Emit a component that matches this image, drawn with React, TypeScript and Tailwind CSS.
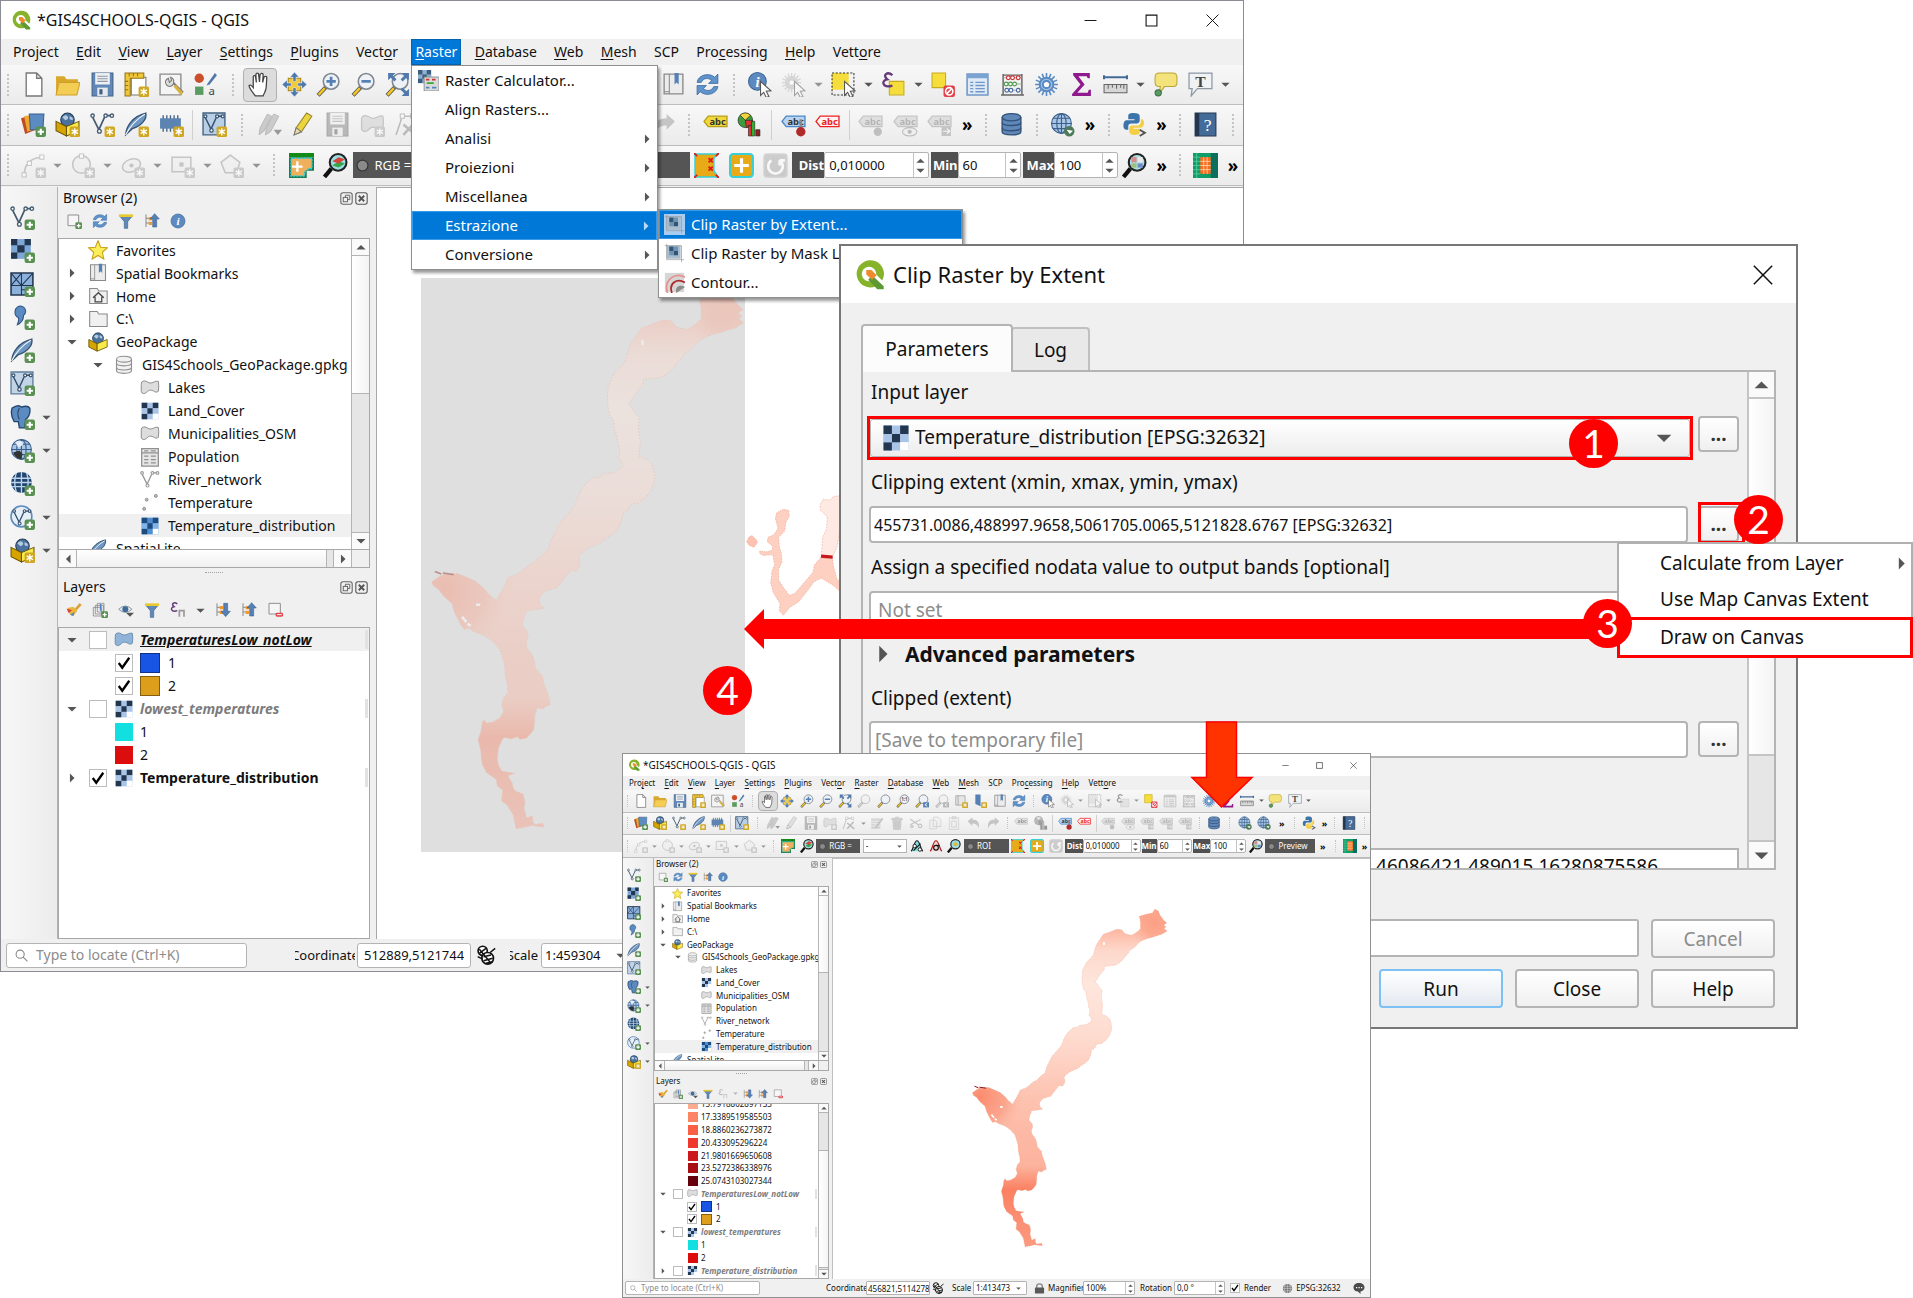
import React from "react";

type Size = "lg" | "sm";

const UI = "font-['Noto_Sans','Open_Sans',sans-serif]";

/* ---------- icon artwork, all on a 24 × 24 grid ---------- */

const plus = (
  <g>
    <rect x="14" y="14" width="10" height="10" rx="2" fill="#5b9053" />
    <path d="M19 16v6M16 19h6" stroke="#fff" strokeWidth="2" />
  </g>
);
const star = (
  <g>
    <rect x="14" y="14" width="10" height="10" rx="1.5" fill="#d0a722" />
    <path d="M19 15.5v7M16 17.2l6 3.6M22 17.2l-6 3.6" stroke="#fff" strokeWidth="1.3" />
  </g>
);
const lens = (
  <g>
    <path d="M9.500 14.500L2 22.500" stroke="#555" strokeWidth="4" />
    <path d="M8.500 15.500L2.500 22" stroke="#f3c722" strokeWidth="2.400" />
    <circle cx="14.500" cy="9" r="7.500" fill="#eef2f6" stroke="#7d8790" strokeWidth="1.500" />
  </g>
);
const darkLens = (fill: string) => (
  <g>
    <path d="M8 15L1.500 23" stroke="#111" strokeWidth="4" />
    <circle cx="14.500" cy="9" r="8" fill={fill} stroke="#222" strokeWidth="2" />
  </g>
);
const vee = (c: string) => (
  <g fill="#fff" stroke={c} strokeWidth="1.300">
    <path d="M2.500 5l6 12 5.500-12M16 3.500h4" fill="none" strokeWidth="1.600" />
    <circle cx="2.500" cy="3.500" r="1.600" />
    <circle cx="9" cy="18.500" r="1.800" />
    <circle cx="15" cy="3.500" r="1.600" />
    <circle cx="21" cy="3.500" r="1.600" />
  </g>
);
const feather = (
  <g>
    <path d="M1.500 22C2 14 8 4 21 1c1 5-3 12-13 15z" fill="#6f97c4" stroke="#35506e" strokeWidth="1.200" />
    <path d="M1.500 22C6 13 12 7 20 2" stroke="#fff" fill="none" />
  </g>
);
const box = (
  <g>
    <circle cx="12" cy="7.500" r="6.500" fill="#4a729d" stroke="#223b55" />
    <path d="M7 5q3-3 5-1t-2 4zM14 4q4 1 3 4l-3-1z" fill="#b6cbe0" />
    <path d="M1 9l10 5v9L1 18z" fill="#d6a400" stroke="#6b5300" />
    <path d="M23 9l-12 5v9l12-5z" fill="#f8ea4d" stroke="#6b5300" />
  </g>
);
const globe = (
  <g fill="none" stroke="#3a5f8a" strokeWidth="1.100">
    <circle cx="11" cy="11" r="9.500" fill="#a9c6e6" />
    <ellipse cx="11" cy="11" rx="4.500" ry="9.500" />
    <path d="M1.500 11h19M3 6h16M3 16h16M11 1.500v19" />
  </g>
);
const blob = (fill: string, c: string) => (
  <path d="M1.500 8q-.500-4 3-4.500c4-.500 5 3 8.500 2.500 4-.500 5-3 9-2q1 5 0 12c-2 1.500-4 1-6-.500-4-2-6-.500-8.500 2-2.500 2-5 1.500-6-1z" fill={fill} stroke={c} strokeWidth="1.200" />
);
const checker = (dark: string, mid: string, light: string) => (
  <g>
    <rect x="2" y="2" width="20" height="20" fill={light} />
    <path d="M2 2h6.700v6.700H2zM15.300 2H22v6.700h-6.700zM8.700 8.700h6.600v6.600H8.700zM2 15.300h6.700V22H2z" fill={dark} />
    <path d="M2 8.700h6.700v6.600H2zM15.300 8.700H22v6.600h-6.700z" fill={mid} />
    <rect x="15.300" y="15.300" width="6.700" height="6.700" fill="#fff" />
  </g>
);
const tag = (fill: string, line: string, ink: string) => (
  <g>
    <path d="M1 9l4-5h18v10H5z" fill={fill} stroke={line} strokeWidth="1.300" />
    <text x="14" y="12" textAnchor="middle" fontSize="9" fontWeight="700" fontFamily="Noto Sans" fill={ink}>
      abc
    </text>
  </g>
);
const funnel = (
  <g>
    <path d="M2 4h20l-7.500 9v10h-5V13z" fill="#6089b8" stroke="#3e6490" />
    <path d="M1.500 2h21v4h-21z" fill="#e8c930" />
  </g>
);
const gear = (fill: string) => (
  <g>
    <path
      d="M12 1v22M1 12h22M4.200 4.200l15.600 15.600M19.800 4.200L4.200 19.800M7.800 1.800l8.400 20.400M16.200 1.800L7.800 22.200M1.800 7.800l20.400 8.400M1.800 16.200l20.400-8.400"
      stroke={fill}
      strokeWidth="1.500"
    />
    <circle cx="12" cy="12" r="7.500" fill={fill} />
    <circle cx="12" cy="12" r="5" fill="none" stroke="#a9c4e2" />
    <circle cx="12" cy="12" r="2.500" fill="#fff" />
  </g>
);
const pointer = <path d="M13 9l10 9-4.500.500 2.500 5-2.500 1-2.500-5-3 3z" fill="#fff" stroke="#555" />;
const treeArrow = (up: boolean) => (
  <g>
    <path d="M3 2v19M3 8h6M3 15h6" stroke="#888" strokeWidth="1.500" fill="none" />
    <path d="M7 6h5v5H7zM7 13h5v5H7z" fill="#f39a2a" />
    <path d={up ? "M16 1l7 8h-4v12h-6V9H9z" : "M16 22l7-8h-4V2h-6v12H9z"} fill="#5580b5" stroke="#365a86" strokeWidth=".8" />
  </g>
);
const refresh = (
  <g fill="#5f93cc" stroke="#33639a" strokeWidth=".7">
    <path d="M2 10C3 3 13 0 19 5l3-3v9h-9l3-3C12 5 8 6 6 10z" />
    <path d="M22 14c-1 7-11 10-17 5l-3 3v-9h9l-3 3c4 3 8 2 10-2z" />
  </g>
);
const calc = (
  <g>
    <path d="M3 2v20M21 2v20M1 22h22M3 3h18" stroke="#666" strokeWidth="1.400" fill="none" />
    <path d="M3 5.500h18M3 11.500h18M3 17.500h18" stroke="#999" strokeWidth=".8" />
    <g fill="#fff" strokeWidth="1.100">
      <g stroke="#c33">
        <circle cx="8" cy="5.500" r="1.800" />
        <circle cx="12" cy="5.500" r="1.800" />
        <circle cx="17.500" cy="5.500" r="1.800" />
      </g>
      <g stroke="#4a9a4a">
        <circle cx="6" cy="11.500" r="1.800" />
        <circle cx="10" cy="11.500" r="1.800" />
        <circle cx="14" cy="11.500" r="1.800" />
      </g>
      <g stroke="#4668a0">
        <circle cx="6.500" cy="17.500" r="1.800" />
        <circle cx="10.500" cy="17.500" r="1.800" />
        <circle cx="17.500" cy="17.500" r="1.800" />
      </g>
    </g>
  </g>
);
const book = (
  <g>
    <path d="M3 2h18v19H3z" fill="#ececec" stroke="#8a8a8a" strokeWidth="1.300" />
    <path d="M8 2v19M3 19h5" stroke="#8a8a8a" />
    <path d="M13 1h4v11l-2-2-2 2z" fill="#5580b5" />
  </g>
);
const db = (a: string, b: string) => (
  <g fill={a} stroke={b} strokeWidth="1.300">
    <path d="M3 5v14c0 4 18 4 18 0V5" />
    <ellipse cx="12" cy="5" rx="9" ry="3.500" />
    <path d="M3 10c0 4 18 4 18 0M3 15c0 4 18 4 18 0" fill="none" />
  </g>
);

const ART: Record<string, React.ReactNode> = {
  logo: (
    <g>
      <path
        fillRule="evenodd"
        d="M12 1a10.500 10.500 0 1 0 5 20l-4-4a5.600 5.600 0 1 1 4.200-5l4.600 4.600A10.500 10.500 0 0 0 12 1z"
        fill="#86b329"
      />
      <path d="M14 12.500l9 8.500v2.500h-5l-7-7.500z" fill="#5e9a34" />
      <path d="M9.500 8.500h4l4 4-3.500 3.500-4.500-4z" fill="#ef8b2c" />
    </g>
  ),
  doc: <path d="M5 1h10l5 5v17H5zM15 1v5h5" fill="#fff" stroke="#777" strokeWidth="1.300" />,
  folder: (
    <g>
      <path d="M1 4h8l2 3h11v4H3v11H1z" fill="#d9a72a" />
      <path d="M4 10h20l-3 12H1z" fill="#f4cd55" stroke="#cf9f2a" />
    </g>
  ),
  save: (
    <g>
      <path d="M2 1h20v22H2z" fill="#5f87b8" stroke="#3f5f87" />
      <path d="M5 1h14v11H5z" fill="#eef0f2" />
      <path d="M7 4h10M7 6.500h10M7 9h10" stroke="#8a96a4" />
      <path d="M7 15h10v8H7z" fill="#e8ebee" />
      <path d="M9 16.500h3v5H9z" fill="#3f5f87" />
    </g>
  ),
  layout: (
    <g>
      <path d="M7 5h14v17H7z" fill="#fff" stroke="#777" />
      <path d="M1 1h18v5H6v17H1z" fill="#f0c63a" stroke="#93731a" />
      <path d="M5 1v3M9 1v3M13 1v3M1 9h3M1 13h3M1 17h3" stroke="#93731a" />
      {star}
    </g>
  ),
  wrench: (
    <g>
      <path d="M1 2h20v20H1z" fill="#f4f4f4" stroke="#8c8c8c" strokeWidth="1.300" />
      <path d="M9 6a4 4 0 1 0 5 5l7 10 2-2-9-9a4 4 0 0 0-3-5l1 3-2 2z" fill="#ddd" stroke="#777" />
      <path d="M15 13l7 8" stroke="#d9b23c" strokeWidth="3" />
    </g>
  ),
  style: (
    <g>
      <circle cx="6" cy="6" r="4.500" fill="#cc4f2c" />
      <path d="M2 14h8v8H2z" fill="#5a9a63" />
      <path d="M14 11L21 1l2 2-7 9-3 1z" fill="#4f79ac" />
      <text x="18" y="22" textAnchor="middle" fontSize="11" fontFamily="Noto Sans" fill="#444">
        a
      </text>
    </g>
  ),
  hand: (
    <path
      d="M8 23c-2-3-6-7-6-10q1.500-1.500 4 2V5q0-2 2-1.500L9 10 8.500 2.500Q9 .500 11 1.500l1 8 .500-7Q14 .500 15.500 2l-.500 8 1.500-5.500q2-1 2.500.500l-.500 9c0 4-2 6-3 9z"
      fill="#fff"
      stroke="#444"
      strokeWidth="1.200"
    />
  ),
  pan: (
    <g>
      <path d="M6 6h12v12H6z" fill="#f1c93a" stroke="#a98513" />
      <path
        d="M12 0l4.500 5h-3v4h-3V5h-3zM12 24l4.500-5h-3v-4h-3v4h-3zM0 12l5-4.500v3h4v3H5v3zM24 12l-5-4.500v3h-4v3h4v3z"
        fill="#4f79ac"
        stroke="#fff"
        strokeWidth=".5"
      />
    </g>
  ),
  zin: <g>{lens}<path d="M14.500 4.500v9M10 9h9" stroke="#5580b5" strokeWidth="2.600" /></g>,
  zout: <g>{lens}<path d="M10 9h9" stroke="#5580b5" strokeWidth="2.600" /></g>,
  zfull: (
    <g>
      {lens}
      <path d="M3 1h7L7.500 3.500 11 7 9 9 5.500 5.500 3 8zM23 1v7l-2.500-2.500L17 9l-2-2 3.500-3.500L16 1zM23 23h-7l2.500-2.500L15 17l2-2 3.500 3.500L23 16z" fill="#4f79ac" />
    </g>
  ),
  zsel: lens,
  zlayer: lens,
  znative: (
    <g>
      {lens}
      <text x="14.500" y="12" textAnchor="middle" fontSize="8" fontWeight="700" fontFamily="Noto Sans" fill="#555">
        1:1
      </text>
    </g>
  ),
  zlast: <g>{lens}<path d="M14 14h10v9H14z" fill="#5580b5" /><path d="M21 16l-4 2.500 4 2.500" stroke="#fff" fill="none" strokeWidth="1.500" /></g>,
  newmap: <g><path d="M3 3h16v16H3z" fill="#e6e6e6" stroke="#888" /><path d="M7 3v16" stroke="#888" />{star}</g>,
  bookmarkadd: <g><path d="M4 1h9v20l-9-4z" fill="#5580b5" />{star}</g>,
  book,
  refresh,
  identify: (
    <g>
      <circle cx="10" cy="9" r="8.500" fill="#5c8ac0" stroke="#3c6595" />
      <text x="10" y="14" textAnchor="middle" fontSize="14" fontStyle="italic" fontWeight="700" fontFamily="Liberation Serif" fill="#fff">
        i
      </text>
      {pointer}
    </g>
  ),
  info: (
    <g>
      <circle cx="12" cy="12" r="10.500" fill="#5c8ac0" stroke="#3c6595" />
      <text x="12" y="18" textAnchor="middle" fontSize="17" fontStyle="italic" fontWeight="700" fontFamily="Liberation Serif" fill="#fff">
        i
      </text>
    </g>
  ),
  action: <g><g transform="scale(.85)">{gear("#b9b9b9")}</g>{pointer}</g>,
  select: <g><path d="M1 1h16v16H1z" fill="#f5dd3c" /><path d="M1 1h21v21H1z" fill="none" stroke="#333" strokeDasharray="2 1.500" />{pointer}</g>,
  selexp: (
    <g>
      <path d="M8 9h14v13H8z" fill="#f5dd3c" stroke="#c7ab1c" />
      <path d="M11 3C6-1 1 3 6 7c-6 1-5 9 5 6" stroke="#653a78" strokeWidth="2.200" fill="none" />
    </g>
  ),
  desel: (
    <g>
      <path d="M1 1h13v14H1z" fill="#f5dd3c" stroke="#c7ab1c" />
      <rect x="12" y="13" width="11" height="11" rx="2" fill="#e2434b" />
      <circle cx="17.500" cy="18.500" r="3.500" fill="none" stroke="#fff" strokeWidth="1.500" />
      <path d="M15 21l5-5" stroke="#fff" strokeWidth="1.500" />
    </g>
  ),
  table: (
    <g>
      <path d="M2 2h20v20H2z" fill="#dfeaf6" stroke="#6f98c8" strokeWidth="1.500" />
      <path d="M2 2h20v4H2z" fill="#7aa3d2" />
      <path d="M5 10h3M10 10h9M5 13h3M10 13h9M5 16h3M10 16h9M5 19h3M10 19h9" stroke="#6f98c8" strokeWidth="1.300" />
    </g>
  ),
  calc,
  gear: gear("#5a8bc4"),
  sigma: <path d="M4 1h16v5h-2l-1-2H9l6 8-7 8h10l1-3h2v6H3v-2l8-9-7-9z" fill="#8e1a8e" />,
  ruler: (
    <g>
      <path d="M1 5h22M1 3v4M23 3v4" stroke="#466a96" strokeWidth="2" />
      <path d="M1 12h22v8H1z" fill="#d7d7d7" stroke="#666" />
      <path d="M5 12v4M9 12v3M13 12v4M17 12v3M20 12v4" stroke="#666" />
    </g>
  ),
  tip: (
    <g>
      <path d="M6 1h13q4 0 4 4v5q0 4-4 4h-8l-5 7 1-7q-5 0-5-4V5q0-4 4-4z" fill="#f3e37a" stroke="#b9a53a" />
      <circle cx="5" cy="20" r="3" fill="#5a9a63" stroke="#386b40" />
    </g>
  ),
  note: (
    <g>
      <path d="M1 1h22v15H9l-6 7 1-7H1z" fill="#f0f2f4" stroke="#8c98a4" strokeWidth="1.200" />
      <text x="12" y="14" textAnchor="middle" fontSize="15" fontWeight="700" fontFamily="Liberation Serif" fill="#444">
        T
      </text>
    </g>
  ),
  layers: (
    <g>
      <path d="M0 6l10-3 4 14-10 4z" fill="#bf4a25" />
      <path d="M3 4l11-2 3 13-11 4z" fill="#eba92f" />
      <path d="M8 2h14l-1 15H9z" fill="#5b8bc0" stroke="#3a618f" />
      {plus}
    </g>
  ),
  boxstar: <g>{box}{star}</g>,
  box,
  veestar: <g>{vee("#435a70")}{star}</g>,
  veeplus: <g>{vee("#435a70")}{plus}</g>,
  vee: vee("#999"),
  featherstar: <g>{feather}{star}</g>,
  featherplus: <g>{feather}{plus}</g>,
  feather,
  chip: (
    <g>
      <path d="M4 3v16M7.500 3v16M11 3v16M14.500 3v16M18 3v16" stroke="#44617f" strokeWidth="1.300" />
      <path d="M1 6h20v10H1z" fill="#5b84b3" />
      {star}
    </g>
  ),
  virt: <g><path d="M1 1h21v21H1z" fill="#b9cfe6" stroke="#44617f" strokeWidth="1.300" /><g transform="translate(1 1) scale(.9)">{vee("#35506e")}</g>{star}</g>,
  virtplus: <g><path d="M1 1h21v21H1z" fill="#c3d4e6" stroke="#5f7d9c" strokeWidth="1.300" /><g transform="translate(1 1) scale(.9)">{vee("#35506e")}</g>{plus}</g>,
  pencils: (
    <g>
      <path d="M2 22l1-7L10 2l4 2-7 14zM8 22l1-7L16 2l5 2-8 15z" fill="#a5a5a5" stroke="#777" strokeWidth=".8" />
      <path d="M16 17h8l-4 5z" fill="#444" />
    </g>
  ),
  pencil: (
    <g>
      <path d="M3 22l2-7L15 1l5 3-10 15z" fill="#ecd53c" stroke="#92812a" />
      <path d="M3 22l2-7 5 4z" fill="#e9d9b5" stroke="#777" />
    </g>
  ),
  shape: <g>{blob("#ccc", "#999")}{star}</g>,
  node: <g><path d="M2 22L8 4h10M8 4h3" stroke="#888" fill="none" strokeWidth="1.500" /><path d="M6 2h4v4H6zM16 2h4v4h-4z" fill="#fff" stroke="#888" /><path d="M9 12l12 10M20 10L9 22" stroke="#888" strokeWidth="2.500" /></g>,
  multi: <g><path d="M2 4h16v18H2z" fill="#bbb" /><path d="M2 9h16M2 13h16M2 17h16" stroke="#fff" /><path d="M8 20L20 3l3 2-12 16z" fill="#999" /></g>,
  trash: <path d="M3 4h6V2h6v2h6v3H3zM5 8h14l-1 15H6zM9 10v10M12 10v10M15 10v10" fill="#c9a9a4" stroke="#b08a86" />,
  cut: <g fill="none" stroke="#999" strokeWidth="2"><path d="M2 5l14 10M2 15L20 6" /><circle cx="19" cy="17" r="3" /><circle cx="5" cy="18" r="2" /></g>,
  copy: <path d="M9 2h9l4 4v12H9zM3 7h9l3 3v12H3z" fill="#eee" stroke="#999" />,
  paste: <path d="M4 3h16v20H4zM9 1h6v4H9zM8 9h8v10H8z" fill="#eee" stroke="#999" />,
  undo: <path d="M1 9l8-7v4c9 0 13 5 11 15-2-6-5-8-11-8v4z" fill="#999" />,
  redo: <path d="M23 9l-8-7v4C6 6 2 11 4 21c2-6 5-8 11-8v4z" fill="#999" />,
  tagy: tag("#f0d83c", "#b99f16", "#333"),
  tagb: <g>{tag("#b8d4f3", "#4b86c8", "#333")}<path d="M19 7v8" stroke="#888" strokeWidth="2.500" /><circle cx="19" cy="19" r="4.500" fill="#b02a2a" /></g>,
  tagr: tag("#fff3f3", "#ee2222", "#ee2222"),
  tagpin: <g>{tag("#ccc", "#999", "#777")}<circle cx="19" cy="19" r="4" fill="#a88" /></g>,
  tageye: <g>{tag("#ccc", "#999", "#777")}<ellipse cx="16" cy="19" rx="7" ry="4" fill="#eee" stroke="#888" /><circle cx="16" cy="19" r="2" fill="#888" /></g>,
  tagmove: <g>{tag("#ccc", "#999", "#777")}<path d="M14 14h9v9h-9z" fill="#999" /><path d="M15.500 18.500h6M19 16l3 2.500-3 2.500" stroke="#fff" fill="none" /></g>,
  chart: (
    <g stroke="#222" strokeWidth=".6">
      <circle cx="8" cy="8" r="7" fill="#3c9c3c" />
      <path d="M8 8L3 3a7 7 0 0 1 10 0z" fill="#f2d33c" />
      <path d="M8 8l7 0a7 7 0 0 1-6 7z" fill="#d33" />
      <path d="M11 13h3v10h-3z" fill="#d33" />
      <path d="M14 9h3v14h-3z" fill="#2cb82c" />
      <path d="M18 17h4v6h-4z" fill="#8b2020" />
    </g>
  ),
  db: db("#5f87b8", "#33527a"),
  dbg: db("#f1f1f1", "#8f8f8f"),
  globe: <g>{globe}<circle cx="18.500" cy="18.500" r="5" fill="#4d7a58" /><path d="M16 17l3 4 3-3z" fill="#fff" /></g>,
  python: (
    <g>
      <path d="M11 1c-4 0-5 1-5 3v3h6v1H4c-3 0-4 9 0 9h2v-3c0-2 1-3 3-3h5c2 0 3-1 3-3V4c0-2-2-3-6-3z" fill="#3a74a8" />
      <path d="M12 22c4 0 5-1 5-3v-3h-6v-1h7c4 0 4-8 1-8h-1v3c0 2-2 3-3 3h-5c-2 0-3 1-3 3v3c0 2 2 3 5 3z" fill="#f4cf43" />
      <path d="M17 17l5 3-5 3" stroke="#555" fill="none" strokeWidth="1.800" />
    </g>
  ),
  help: (
    <g>
      <path d="M2 1h20v22H2z" fill="#456b98" stroke="#22364f" />
      <path d="M2 1h4v22H2z" fill="#22364f" />
      <text x="14" y="18" textAnchor="middle" fontSize="17" fontFamily="Liberation Serif" fill="#fff">
        ?
      </text>
    </g>
  ),
  arc: <g><path d="M3 22Q3 5 20 4" fill="none" stroke="#999" strokeWidth="1.500" /><path d="M1 19h4v4H1zM18 2h4v4h-4zM6 8h4v4H6z" fill="#fff" stroke="#999" />{star}</g>,
  circ: <g><circle cx="11" cy="11" r="8.500" fill="#eee" stroke="#999" strokeWidth="1.500" /><path d="M9 1h4v4H9z" fill="#fff" stroke="#999" />{star}</g>,
  elli: <g><ellipse cx="11" cy="12" rx="9" ry="6" transform="rotate(-20 11 12)" fill="#eee" stroke="#999" strokeWidth="1.500" /><circle cx="11" cy="12" r="2" fill="#999" />{star}</g>,
  rect: <g><path d="M2 4h18v14H2z" fill="#eee" stroke="#999" strokeWidth="1.500" /><path d="M9 9h4v4H9z" fill="#999" />{star}</g>,
  poly: <g><path d="M11 2l9 7-3 10H6L2 9z" fill="#eee" stroke="#999" strokeWidth="1.500" />{star}</g>,
  scpmap: (
    <g>
      <path d="M0 0h24v4H0z" fill="#138a13" />
      <path d="M0 4h24v13h-7v7H0z" fill="#1c7a4c" />
      <path d="M2 5h20v10h-3l-4 3v4H2z" fill="#eeb05c" stroke="#35d0d8" strokeWidth="1.500" strokeDasharray="2 1" />
      <path d="M8 8v10M3 13h10" stroke="#fff" strokeWidth="2.200" />
    </g>
  ),
  scplens: <g>{darkLens("#9adfe3")}<path d="M9 12l6-4 6 2-6 4z" fill="#3aa24a" /><path d="M9 8l6-4 6 2-6 4z" fill="#d8433a" /></g>,
  nb: <g><path d="M2 21C6 18 7 3 12 3s6 15 10 18" fill="#7fe0e4" stroke="#111" strokeWidth="1.800" /><path d="M6 20L18 8" stroke="#111" strokeWidth="2" /><circle cx="8" cy="12" r="3" fill="#fff" stroke="#111" strokeWidth="1.500" /><circle cx="17" cy="18" r="3" fill="#fff" stroke="#111" strokeWidth="1.500" /></g>,
  nbr: <g><path d="M2 21C6 18 7 3 12 3s6 15 10 18" fill="#f6d7d7" stroke="#b01818" strokeWidth="2" /><circle cx="12" cy="15" r="4" fill="none" stroke="#111" strokeWidth="2" /><path d="M12 11h6" stroke="#111" strokeWidth="2" /></g>,
  goldlens: <g>{darkLens("#9adfe3")}<path d="M14.500 5v8M10.500 9h8" stroke="#eeb422" strokeWidth="3" /></g>,
  roi: (
    <g>
      <path d="M1 1h22l-4 4v12l4 6H1z" fill="#e9aa17" />
      <path d="M1 1h22l-4 4v12l4 6H1z" fill="none" stroke="#35d0d8" strokeWidth="1.500" />
      <path d="M14 5l4 4M18 5l-4 4M14 13l4 4M18 13l-4 4M0 0l3 3M24 0l-3 3M0 24l3-3M24 24l-3-3" stroke="#e01818" strokeWidth="1.800" />
    </g>
  ),
  roiplus: <g><rect x="1" y="1" width="22" height="22" rx="3" fill="#e9aa17" stroke="#35d0d8" strokeWidth="2" /><path d="M12 5v14M5 12h14" stroke="#fff" strokeWidth="3" /></g>,
  roire: <g><rect x="1" y="1" width="22" height="22" rx="3" fill="#a8a89c" stroke="#a8b8ba" strokeWidth="1.500" /><path d="M8 7a7 7 0 1 0 8 0M16 7v5M16 7h5" fill="none" stroke="#fff" strokeWidth="2.600" /></g>,
  scplens2: <g>{darkLens("#a9dfe5")}<path d="M9 4h5v5H9z" fill="#d98a8a" /><path d="M15 4h5v5h-5z" fill="#e8e8e8" /><path d="M9 10h5v4H9z" fill="#9cc27a" /><path d="M15 10h5v4h-5z" fill="#6b8cc9" /></g>,
  teal: (
    <g>
      <path d="M0 0h24v24H0z" fill="#0f9d68" />
      <path d="M17 0h7v24h-7z" fill="#0a6f5c" />
      <path d="M7 4h10v16H7z" fill="#ff6a1f" />
      <path d="M7 8h10M7 12h10M7 16h10M10.300 4v16M13.600 4v16" stroke="#ffd9a8" strokeWidth=".8" />
      <path d="M0 4h7M0 8h7M0 12h7M0 16h7M0 20h7M3.500 0v24" stroke="#6fd8ae" strokeWidth=".6" />
    </g>
  ),
  rasterplus: (
    <g>
      <path d="M1 1h19v19H1z" fill="#7fa7d6" />
      <path d="M1 1h6v6H1zM14 1h6v6h-6zM7 7h7v7H7zM1 14h6v6H1z" fill="#22364f" />
      {plus}
    </g>
  ),
  mesh: <g><path d="M1 1h21v21H1z" fill="#8bb0db" stroke="#22364f" strokeWidth="1.500" /><path d="M1 13h21M11 1v21M1 1l10 12M22 1L11 13M1 13L11 1M11 17h11" stroke="#22364f" fill="none" />{plus}</g>,
  comma: <g><path d="M5 6a5 5 0 1 1 8 4c0 4-2 7-6 9 1-3 2-5 1-7a5 5 0 0 1-3-6z" fill="#5b8bc0" stroke="#2e5280" />{plus}</g>,
  pg: <g><path d="M2 3q6-4 9-1 6-2 8 1 1 7-4 11l-1 8H9l-1-6H4Q0 9 2 3z" fill="#5b8bc0" stroke="#27466c" strokeWidth="1.300" /><path d="M9 3q-3 5 0 11" stroke="#27466c" fill="none" />{plus}</g>,
  wms: <g>{globe}<path d="M3 14l6-2 3 3-1 5q-5 1-8-6z" fill="#333" /><path d="M5 4q5-3 7 0t-4 5z" fill="#e3edf7" />{plus}</g>,
  wcs: <g><circle cx="11" cy="11" r="10" fill="#22456e" /><path d="M2 7h18M1 11h20M2 15h18M11 1v20M6 2q-3 9 0 18M16 2q3 9 0 18" stroke="#bcd4ee" strokeWidth="1.300" fill="none" />{plus}</g>,
  wfs: <g><circle cx="11" cy="11" r="10" fill="#e6eff8" stroke="#5b8bc0" strokeWidth="1.500" /><g transform="translate(2 3) scale(.8)">{vee("#35506e")}</g>{plus}</g>,
  addlay: <g><path d="M3 3h16v16H3z" fill="#f6f6f6" stroke="#8f8f8f" strokeWidth="1.500" />{plus}</g>,
  dellay: <g><path d="M3 2h17v16H3z" fill="#f6f6f6" stroke="#8f8f8f" strokeWidth="1.500" /><rect x="13" y="16" width="11" height="6" rx="2" fill="#e2434b" /><path d="M15 19h7" stroke="#fff" strokeWidth="1.500" /></g>,
  funnel,
  collapse: treeArrow(true),
  expand: treeArrow(false),
  fav: <path d="M12 1l3.200 7.600 8 .700-6 5.400 1.800 8.200-7-4.400-7 4.400 1.800-8.200-6-5.400 8-.700z" fill="#fbee5a" stroke="#c9a21a" strokeWidth="1.300" />,
  home: <g><path d="M2 3h9l2 3h10v15H2z" fill="#f0f0f0" stroke="#8a8a8a" strokeWidth="1.300" /><path d="M6 14l6.500-6 6.500 6M8.500 13v6h8v-6" fill="none" stroke="#444" strokeWidth="1.500" /></g>,
  dir: <path d="M2 3h9l2 3h10v15H2z" fill="#f0f0f0" stroke="#8a8a8a" strokeWidth="1.300" />,
  blobg: blob("#ddd", "#8f8f8f"),
  blobb: blob("#8fb4d8", "#6e90b0"),
  ras: checker("#22364f", "#a9c4e6", "#a9c4e6"),
  rasb: checker("#1d4b80", "#7fb4e4", "#4f8fd0"),
  tabg: <g><path d="M2 2h20v21H2z" fill="#e6e6e6" stroke="#8f8f8f" strokeWidth="1.500" /><path d="M2 7h20M5 11h5M13 11h6M5 15h5M13 15h6M5 19h5M13 19h6M5 4.500h5M13 4.500h6" stroke="#8f8f8f" strokeWidth="1.500" /></g>,
  pts: <g fill="#bbb" stroke="#888"><circle cx="5" cy="19" r="1.800" /><circle cx="8" cy="8" r="1.800" /><circle cx="19" cy="3.500" r="1.800" /></g>,
  brush: <g><path d="M13 13L22 3" stroke="#d9a23c" strokeWidth="4" /><path d="M2 9l9-2 6 6-6 8-5-2z" fill="#e9b53c" /><path d="M1 10l8 2-5 5z" fill="#d8433a" /><path d="M6 19l7-4-2 6z" fill="#4f86c2" /></g>,
  group: <g><path d="M2 8h12v13H2zM5 5h12v13H5zM8 2h10v13H8z" fill="#eee" stroke="#777" /><path d="M13 3v10" stroke="#4f86c2" strokeWidth="2.500" />{plus}</g>,
  eye: <g><path d="M1 11q10-10 20 0-10 9-20 0z" fill="#e9eef2" stroke="#8a97a3" strokeWidth="1.500" /><circle cx="11" cy="11" r="4.500" fill="#3f6a99" /><path d="M12 16h12l-6 6z" fill="#555" /></g>,
  eps: <g><path d="M11 3C6-1 1 3 6 7c-6 1-5 9 5 6" stroke="#653a78" strokeWidth="2.200" fill="none" /><path d="M14 22v-9h7v9M14 19v3M21 19v3" stroke="#999" strokeWidth="2.500" fill="none" /></g>,
  rcalc: <g><path d="M0 0h15v15H0z" fill="#3c5d7c" /><path d="M5 0h5v5H5zM0 5h5v5H0zM10 5h5v5h-5zM5 10h5v5H5z" fill="#8fb0cf" /><path d="M7 8h17v16H7z" fill="#d9d9d9" stroke="#888" /><path d="M9 11h4M16 11h4" stroke="#c33" strokeWidth="2" /><path d="M10 15h8" stroke="#3a3" strokeWidth="2" /><path d="M9 20h4M16 20h5" stroke="#4f86c2" strokeWidth="2" /></g>,
  clip: <g><path d="M3 3h16v15H3z" fill="#a9bdcc" /><path d="M6 4h5v5H6zM11 9h5v5h-5z" fill="#2f5677" /><path d="M11 4h5v5h-5zM6 9h5v5H6z" fill="#6f93b0" /><path d="M1 3h19v19M3 1v18h20" fill="none" stroke="#999" strokeWidth=".8" /></g>,
  contour: <g><path d="M1 1h22v22H1z" fill="#d6d6d6" /><path d="M4 24C-1 8 14 0 24 6" fill="none" stroke="#e79090" strokeWidth="2" /><path d="M9 24C5 12 15 7 24 12" fill="none" stroke="#b02a2a" strokeWidth="2" /><path d="M14 24c-2-7 4-10 10-7z" fill="#8c8c8c" /></g>,
  bug: <g><circle cx="8" cy="7" r="5.500" fill="#fff" stroke="#111" strokeWidth="2" /><circle cx="14" cy="16" r="7" fill="#fff" stroke="#111" strokeWidth="2" /><path d="M4 5l14 17M4 10L12 4M9 14l9-2M9 19l11-3M12 22l8-2M17 9l6-5M2 14l6 3" stroke="#111" strokeWidth="1.800" /></g>,
  lock: <g><path d="M6 11V7q0-5 6-5t6 5v4" fill="none" stroke="#888" strokeWidth="3" /><rect x="2" y="10" width="20" height="13" rx="1" fill="#5a5a5a" /></g>,
  crs: <g><circle cx="12" cy="12" r="10" fill="#777" /><path d="M2 12h20M4 7h16M4 17h16M12 2v20M7 3q-3 9 0 18M17 3q3 9 0 18" fill="none" stroke="#ddd" /></g>,
  msg: <g><path d="M12 2C5 2 1 6 1 11s4 8 9 8l5 5v-5c5-1 8-4 8-8 0-5-4-9-11-9z" fill="#4b4b4b" /><path d="M6 11h2.500M11 11h2.500M16 11h2.500" stroke="#fff" strokeWidth="2.500" /></g>,
  search: <g fill="none" stroke="#888" strokeWidth="2"><circle cx="9.500" cy="9.500" r="7.500" /><path d="M15 15l8 8" /></g>,
  float: <g fill="none" stroke="#666"><rect x="1.500" y="1.500" width="21" height="21" rx="4" strokeWidth="2" /><rect x="6" y="10" width="8" height="8" strokeWidth="1.800" /><path d="M10 10V6h8v8h-4" strokeWidth="1.800" /></g>,
  closex: <g fill="none" stroke="#555"><rect x="1.500" y="1.500" width="21" height="21" rx="4" strokeWidth="2" /><path d="M7 7l10 10M17 7L7 17" strokeWidth="3.500" /></g>,
  min: <path d="M1 12h22" stroke="#111" strokeWidth="1.800" />,
  max: <path d="M2 2h20v20H2z" fill="none" stroke="#111" strokeWidth="2" />,
  x: <path d="M1 1l22 22M23 1L1 23" stroke="#111" strokeWidth="1.800" />,
  down: <path d="M1 7h22L12 18z" fill="#555" />,
  up: <path d="M1 18h22L12 7z" fill="#555" />,
  right: <path d="M7 1v22l11-11z" fill="#555" />,
  rightlight: <path d="M7 1v22l11-11z" fill="#b9d8f5" />,
  left: <path d="M18 1v22L7 12z" fill="#555" />,
};

const Icon = ({ n, c }: { n: string; c: string }) => (
  <svg viewBox="0 0 24 24" className={c} aria-hidden="true">
    {ART[n]}
  </svg>
);

/* ---------- size tables for the two application windows ---------- */

const SIZES = {
  lg: {
    text: "text-[14px]",
    title: "h-[38px] pl-[10px] gap-[6px] text-[16px]",
    logo: "size-[20px]",
    winBtn: "w-[61px]",
    winIcon: "size-[13px]",
    menu: "h-[26px] pl-[8px]",
    menuList: "w-[876px]",
    menuItem: "px-1",
    bars: "h-[121px]",
    bar1: "w-[1232px]",
    icon: "size-[25px]",
    tri: "size-[9px]",
    step: "w-[15px]",
    chev: "text-[17px]",
    grip: "h-[22px] border-l-2",
    side: "w-[57px] pt-[14px]",
    sideGrid: "h-[366px] pl-[9px]",
    dock: "w-[312px] mr-[6px]",
    head: "h-[22px] pl-[5px] pr-[2px]",
    headIcon: "size-[13px]",
    tools: "h-[24px] pl-[8px] gap-[10px] mb-[5px]",
    toolIcon: "size-[16px]",
    tree: "h-[330px]",
    treeRows: "h-[321px]",
    bar: "w-[18px]",
    hbar: "h-[18px]",
    split: "h-[8px]",
    layers: "",
    cell: "w-[26px]",
    treeIcon: "size-[20px]",
    arrow: "size-[10px]",
    gap: "pl-[5px]",
    layerGap: "pl-[3px]",
    check: "size-[18px]",
    tick: "size-[14px]",
    swatch: "size-[20px]",
    status: "h-[32px] px-[5px]",
    thumb: "h-[138px]",
    ind: ["pl-0", "pl-[26px]", "pl-[52px]"],
    input: "h-[26px] text-[13px]",
    field: "px-[4px]",
    labelText: "text-[13px]",
  },
  sm: {
    text: "text-[8px]",
    title: "h-[22px] pl-[5px] gap-[3px] text-[10px]",
    logo: "size-[12px]",
    winBtn: "w-[34px]",
    winIcon: "size-[7px]",
    menu: "h-[14px] pl-[4px]",
    menuList: "w-[491px]",
    menuItem: "px-[2px]",
    bars: "h-[68px]",
    bar1: "w-[690px]",
    icon: "size-[14px]",
    tri: "size-[5px]",
    step: "w-[9px]",
    chev: "text-[9px]",
    grip: "h-[12px] border-l",
    side: "w-[31px] pt-[8px]",
    sideGrid: "h-[205px] pl-[4px]",
    dock: "w-[175px] mr-[3px]",
    head: "h-[12px] px-[2px]",
    headIcon: "size-[7px]",
    tools: "h-[13px] pl-[4px] gap-[5px] mb-[3px]",
    toolIcon: "size-[10px]",
    tree: "h-[185px]",
    treeRows: "h-[179px]",
    bar: "w-[10px]",
    hbar: "h-[10px]",
    split: "h-[4px]",
    layers: "-mt-[6px]",
    cell: "w-[15px]",
    treeIcon: "size-[11px]",
    arrow: "size-[6px]",
    gap: "pl-[2px]",
    layerGap: "pl-px",
    check: "size-[10px]",
    tick: "size-[8px]",
    swatch: "size-[11px]",
    status: "h-[18px] px-[2px]",
    thumb: "h-[77px]",
    ind: ["pl-0", "pl-[15px]", "pl-[29px]"],
    input: "h-[14px] text-[8px]",
    field: "px-[2px]",
    labelText: "text-[8px]",
  },
};
type S = (typeof SIZES)["lg"];

/* ---------- toolbars ---------- */

const W: Record<string, string> = {
  "!": "grow-30",
  "|": "grow-34",
  "||": "grow-40",
  v: "grow-31",
  V: "grow-31",
  "/": "grow-18",
  "»": "grow-40",
  "»»": "grow-60",
};

function Tool({ t, s }: { t: string; s: S }) {
  const base = "flex h-full min-w-0 basis-0 items-center justify-center ";
  if (t === "|" || t === "||" || t === "!")
    return (
      <span className={base + W[t]}>
        <span className={"border-dotted border-[#c4c4c4] " + s.grip} />
      </span>
    );
  if (t === "/")
    return (
      <span className={base + W[t]}>
        <span className="h-3/4 border-l border-[#d0d0d0]" />
      </span>
    );
  if (t === "v" || t === "V")
    return (
      <button aria-label="More options" className={base + W[t] + (t === "V" ? " opacity-60" : "")}>
        <Icon n="down" c={"shrink-0 " + s.tri} />
      </button>
    );
  if (t[0] === "»")
    return (
      <button aria-label="Show more" className={base + "font-bold leading-none text-black " + W[t] + " " + s.chev}>
        »
      </button>
    );
  const off = t[0] === "~";
  const on = t[0] === "*";
  const n = off || on ? t.slice(1) : t;
  return (
    <button
      aria-label={n}
      disabled={off}
      className={base + "grow-69" + (off ? " opacity-50 grayscale" : "")}
    >
      <span className={on ? "rounded-sm border border-[#b0b0b0] bg-[#dcdcdc] p-[10%]" : ""}>
        <Icon n={n} c={"shrink-0 " + s.icon} />
      </span>
    </button>
  );
}

const Tools = ({ list, s }: { list: string; s: S }) => (
  <>
    {list.split(" ").map((t, i) => (
      <Tool key={i} t={t} s={s} />
    ))}
  </>
);

const BAR1_HEAD =
  "! doc folder save layout wrench style || *hand pan zin zout zfull ~zsel zlayer znative zlast ~zlast newmap bookmarkadd book refresh | identify ~action V ";
const BAR1: Record<Size, string> = {
  lg: BAR1_HEAD + "select v selexp v desel table calc gear sigma ruler v tip note v",
  sm: BAR1_HEAD + "~select V ~selexp V desel ~table ~calc gear sigma ruler v tip note v",
};
const BAR2: Record<Size, string> = {
  lg: "! layers boxstar veestar featherstar chip / virt || ~pencils pencil ~save ~shape ~node V ~multi ~trash ~cut ~copy ~paste ~undo ~redo | tagy chart / tagb tagr / ~tagpin ~tageye ~tagmove » | db | globe » | python » | help ||",
  sm: "! layers boxstar veestar featherstar chip / virt || ~pencils ~pencil ~save ~shape ~node V ~multi ~trash ~cut ~copy ~paste ~undo ~redo | ~tagy ~chart / tagb tagr / ~tagpin ~tageye ~tagmove ~tagmove ~tagmove | db || globe globe »» | python » | help ||",
};

const Steps = ({ s }: { s: S }) => (
  <span className={"flex shrink-0 flex-col items-center justify-center gap-px border-l border-[#c4c4c4] " + s.step}>
    <Icon n="up" c={s.tri} />
    <Icon n="down" c={s.tri} />
  </span>
);

function Spin({ label, value, s, grow, lgrow }: { label: string; value: string; s: S; grow: string; lgrow: string }) {
  const id = React.useId();
  return (
    <>
      <label
        htmlFor={id}
        className={"flex min-w-0 basis-0 items-center justify-end bg-[#505050] font-bold text-white " + lgrow + " " + s.input}
      >
        {label}
      </label>
      <span className={"flex min-w-0 basis-0 rounded-[2px] border border-[#b4b4b4] bg-white " + grow + " " + s.input}>
        <input id={id} defaultValue={value} className={"w-full min-w-0 bg-transparent text-[#111] " + s.field} />
        <Steps s={s} />
      </span>
    </>
  );
}

const Dark = ({ text, grow, s }: { text: string; grow: string; s: S }) => (
  <button className={"flex min-w-0 basis-0 items-center gap-[8%] overflow-hidden bg-[#555] px-[3px] text-white whitespace-nowrap " + grow + " " + s.input}>
    <svg viewBox="0 0 12 12" className="h-1/2 shrink-0" aria-hidden="true">
      <circle cx="6" cy="6" r="5" fill="#8a8a8a" stroke="#333" />
    </svg>
    {text}
  </button>
);

function Toolbars({ size }: { size: Size }) {
  const s = SIZES[size];
  const row = "min-h-0 border-b border-[#bdbdbd] bg-linear-to-b from-[#f8f8f8] to-[#ebebeb]";
  return (
    <div className={"grid shrink-0 grid-rows-3 " + s.bars}>
      <div className={row}>
        <div className={"flex h-full items-center " + s.bar1}>
          <Tools s={s} list={BAR1[size]} />
        </div>
      </div>
      <div className={row + " flex items-center"}>
        <Tools s={s} list={BAR2[size]} />
      </div>
      <div className={row + " flex items-center"}>
        <Tools s={s} list="! ~arc V ~circ V ~elli V ~rect V ~poly V || scpmap scplens" />
        <Dark s={s} text="RGB =" grow="grow-138" />
        <span className={"relative ml-[3px] flex min-w-0 basis-0 grow-156 items-center border border-[#b4b4b4] bg-white " + s.input}>
          <select aria-label="Band combination" className={"size-full appearance-none " + s.field}>
            <option>-</option>
          </select>
          <Icon n="down" c={"pointer-events-none absolute right-1 " + s.tri} />
        </span>
        <Tools s={s} list="nb nbr goldlens" />
        <Dark s={s} text="ROI" grow="grow-142" />
        <Tools s={s} list="roi roiplus ~roire" />
        <Spin s={s} label="Dist" value="0,010000" lgrow="grow-64" grow="grow-206" />
        <span className="min-w-0 basis-0 grow-4" />
        <Spin s={s} label="Min" value="60" lgrow="grow-54" grow="grow-124" />
        <span className="min-w-0 basis-0 grow-4" />
        <Spin s={s} label="Max" value="100" lgrow="grow-62" grow="grow-124" />
        <Tools s={s} list="scplens2" />
        {size === "sm" && <Dark s={s} text="Preview" grow="grow-160" />}
        <Tools s={s} list={size === "sm" ? "»» | teal »" : "» | teal »"} />
      </div>
    </div>
  );
}

/* ---------- menu bar and title ---------- */

const MENUS = "Pro_ject _Edit _View _Layer _Settings _Plugins Vect_or _Raster _Database _Web _Mesh SCP Pro_cessing _Help Vett_ore".split(" ");

function MenuBar({ s, active }: { s: S; active?: string }) {
  return (
    <nav className={"flex shrink-0 bg-[#f0f0f0] text-[#111] " + s.menu + " " + s.text}>
      <div className={"flex h-full justify-between " + s.menuList}>
        {MENUS.map((m) => {
          const [a, b] = m.includes("_") ? m.split("_") : [m, ""];
          const on = active !== undefined && m === active;
          return (
            <button
              key={m}
              className={"h-full leading-none " + s.menuItem + (on ? " bg-[#0078d7] text-white outline-1 -outline-offset-1 outline-[#0063b1]" : "")}
            >
              {a}
              <span className="underline underline-offset-2">{b.slice(0, 1)}</span>
              {b.slice(1)}
            </button>
          );
        })}
      </div>
    </nav>
  );
}

const TitleBar = ({ s }: { s: S }) => (
  <header className={"flex shrink-0 items-center bg-white text-[#111] " + s.title}>
    <Icon n="logo" c={s.logo} />
    <h1 className="grow">*GIS4SCHOOLS-QGIS - QGIS</h1>
    <div className="flex shrink-0">
      {["min", "max", "x"].map((b) => (
        <button key={b} aria-label={b} className={"flex justify-center " + s.winBtn}>
          <Icon n={b} c={s.winIcon} />
        </button>
      ))}
    </div>
  </header>
);

/* ---------- docks ---------- */

const SIDE = [
  ["veeplus"], ["rasterplus"], ["mesh"], ["comma"], ["featherplus"], ["virtplus"],
  ["pg", "v"], ["wms", "v"], ["wcs"], ["wfs", "v"], ["boxstar", "v"],
];

const SideBar = ({ s }: { s: S }) => (
  <div className={"shrink-0 border-r border-[#b4b4b4] bg-linear-to-r from-[#f7f7f7] to-[#ececec] " + s.side}>
    <div className={"grid auto-rows-fr " + s.sideGrid}>
      {SIDE.map(([n, v]) => (
        <div key={n} className="flex min-h-0 items-center gap-[14%]">
          <button aria-label={n}>
            <Icon n={n} c={s.icon} />
          </button>
          {v && (
            <button aria-label={n + " options"}>
              <Icon n="down" c={s.tri} />
            </button>
          )}
        </div>
      ))}
    </div>
  </div>
);

const DockHead = ({ s, title, tools }: { s: S; title: string; tools: string }) => (
  <>
    <div className={"flex shrink-0 items-center gap-[2px] text-[#111] " + s.head + " " + s.text}>
      <h2 className="grow">{title}</h2>
      <button aria-label={"Float " + title}>
        <Icon n="float" c={s.headIcon} />
      </button>
      <button aria-label={"Close " + title}>
        <Icon n="closex" c={s.headIcon} />
      </button>
    </div>
    <div className={"flex shrink-0 items-center " + s.tools}>
      {tools.split(" ").map((t, i) => {
        const off = t[0] === "~";
        const n = off ? t.slice(1) : t;
        return (
          <button key={i} aria-label={n} className={off ? "opacity-40 grayscale" : ""}>
            <Icon n={n} c={n === "down" ? s.tri : s.toolIcon} />
          </button>
        );
      })}
    </div>
  </>
);

const TREE: [number, string, string, string][] = [
  [0, "", "fav", "Favorites"],
  [0, "right", "book", "Spatial Bookmarks"],
  [0, "right", "home", "Home"],
  [0, "right", "dir", "C:\\"],
  [0, "down", "box", "GeoPackage"],
  [1, "down", "dbg", "GIS4Schools_GeoPackage.gpkg"],
  [2, "", "blobg", "Lakes"],
  [2, "", "ras", "Land_Cover"],
  [2, "", "blobg", "Municipalities_OSM"],
  [2, "", "tabg", "Population"],
  [2, "", "vee", "River_network"],
  [2, "", "pts", "Temperature"],
  [2, "", "rasb", "Temperature_distribution"],
  [0, "", "feather", "SpatiaLite"],
];

const Arrow = ({ s, dir }: { s: S; dir: string }) => (
  <span className={"flex shrink-0 justify-center " + s.cell}>
    {dir && (
      <button aria-label="Toggle branch">
        <Icon n={dir} c={s.arrow} />
      </button>
    )}
  </span>
);

const ScrollBtn = ({ s, n, c }: { s: S; n: string; c: string }) => (
  <button aria-label={"Scroll " + n} className={"flex shrink-0 items-center justify-center bg-[#fafafa] " + c}>
    <Icon n={n} c={s.arrow} />
  </button>
);

function VBar({ s, thumb, track }: { s: S; thumb: string; track: string }) {
  return (
    <div className={"flex shrink-0 flex-col border-l border-[#b4b4b4] bg-[#e6e6e6] " + s.bar}>
      <ScrollBtn s={s} n="up" c="aspect-square border-b border-[#b4b4b4]" />
      <span className={track} />
      <span className={"border-b border-[#b4b4b4] bg-linear-to-r from-white to-[#f4f4f4] " + thumb} />
      <span className="grow" />
      <ScrollBtn s={s} n="down" c="aspect-square border-t border-[#b4b4b4]" />
    </div>
  );
}

function Browser({ s }: { s: S }) {
  return (
    <>
      <DockHead s={s} title="Browser (2)" tools="addlay refresh funnel collapse info" />
      <div className={"flex shrink-0 flex-col border border-[#a8a8a8] bg-white " + s.tree}>
        <div className="flex min-h-0 grow">
          <div className="min-w-0 grow overflow-hidden">
            <ul className={"grid auto-rows-fr text-[#111] " + s.treeRows + " " + s.text}>
              {TREE.map(([lvl, dir, icon, label]) => (
                <li
                  key={label}
                  className={
                    "flex min-h-0 items-center whitespace-nowrap " +
                    s.ind[lvl] +
                    (label === "Temperature_distribution" ? " bg-[#f0f0f0]" : "")
                  }
                >
                  <Arrow s={s} dir={dir} />
                  <span className={"flex shrink-0 justify-center " + s.cell}>
                    <Icon n={icon} c={s.treeIcon} />
                  </span>
                  <span className={s.gap}>{label}</span>
                </li>
              ))}
            </ul>
          </div>
          <VBar s={s} thumb={s.thumb} track="" />
        </div>
        <div className={"flex shrink-0 border-t border-[#a8a8a8] bg-[#e6e6e6] " + s.hbar}>
          <ScrollBtn s={s} n="left" c={"border-r border-[#b4b4b4] " + s.bar} />
          <span className="grow border-r border-[#b4b4b4] bg-linear-to-b from-white to-[#f0f0f0]" />
          <ScrollBtn s={s} n="right" c={"ml-[2%] border-l border-[#b4b4b4] " + s.bar} />
          <span className={"border-l border-[#b4b4b4] bg-[#f0f0f0] " + s.bar} />
        </div>
      </div>
      <div className={"flex shrink-0 items-center justify-center " + s.split}>
        <span className="w-[6%] border-t border-dotted border-[#a0a0a0]" />
      </div>
    </>
  );
}

type Layer =
  | { kind: "layer"; dir: string; on: boolean; icon: string; name: string; look: string }
  | { kind: "rule"; color: string; name: string }
  | { kind: "value"; color: string; name: string };

const GREY = "font-bold italic text-[#7c7c7c]";
const lowest = (look: string): Layer[] => [
  { kind: "layer", dir: "down", on: false, icon: "ras", name: "lowest_temperatures", look },
  { kind: "value", color: "bg-[#12dfdf]", name: "1" },
  { kind: "value", color: "bg-[#dc0d0d]", name: "2" },
];
const rules: Layer[] = [
  { kind: "rule", color: "bg-[#1955e4]", name: "1" },
  { kind: "rule", color: "bg-[#dd9f1b]", name: "2" },
];
const LAYERS: Record<Size, Layer[]> = {
  lg: [
    { kind: "layer", dir: "down", on: false, icon: "blobb", name: "TemperaturesLow_notLow", look: "font-bold italic underline" },
    ...rules,
    ...lowest(GREY),
    { kind: "layer", dir: "right", on: true, icon: "ras", name: "Temperature_distribution", look: "font-bold" },
  ],
  sm: [
    { kind: "value", color: "bg-[#fcab8e]", name: "15.7918802897133" },
    { kind: "value", color: "bg-[#fc8565]", name: "17.3389519585503" },
    { kind: "value", color: "bg-[#fa6144]", name: "18.8860236273872" },
    { kind: "value", color: "bg-[#ee392c]", name: "20.433095296224" },
    { kind: "value", color: "bg-[#cc191e]", name: "21.9801669650608" },
    { kind: "value", color: "bg-[#a70f15]", name: "23.5272386338976" },
    { kind: "value", color: "bg-[#67000d]", name: "25.0743103027344" },
    { kind: "layer", dir: "down", on: false, icon: "blobg", name: "TemperaturesLow_notLow", look: GREY },
    ...rules,
    ...lowest(GREY),
    { kind: "layer", dir: "right", on: false, icon: "ras", name: "Temperature_distribution", look: GREY },
  ],
};

const Check = ({ s, on, label }: { s: S; on: boolean; label: string }) => (
  <span className={"flex shrink-0 justify-center " + s.cell}>
    <span className={"relative flex items-center justify-center " + s.check}>
      <input
        type="checkbox"
        defaultChecked={on}
        aria-label={label}
        className="peer absolute inset-0 appearance-none border border-[#bcbcbc] bg-white"
      />
      <svg viewBox="0 0 24 24" aria-hidden="true" className={"pointer-events-none relative hidden peer-checked:block " + s.tick}>
        <path d="M3 12l6 8L21 3" fill="none" stroke="#000" strokeWidth="4" />
      </svg>
    </span>
  </span>
);

function Layers({ size }: { size: Size }) {
  const s = SIZES[size];
  const rows = LAYERS[size];
  return (
    <>
      <DockHead
        s={s}
        title="Layers"
        tools={size === "lg" ? "brush group eye funnel eps down expand collapse dellay" : "brush group eye funnel ~eps ~down expand collapse dellay"}
      />
      <div className="flex min-h-0 grow border border-[#a8a8a8] bg-white">
        <div className="min-w-0 grow overflow-hidden">
          <ul
            className={
              "grid auto-rows-fr text-[#111] " + s.text + " " + s.layers + " " + (size === "lg" ? "h-[161px]" : "h-[179px]")
            }
          >
            {rows.map((r, i) => (
              <li
                key={i}
                className={
                  "flex min-h-0 items-center whitespace-nowrap " +
                  (r.kind === "rule" ? s.ind[2] : r.kind === "value" ? s.ind[1] : "") +
                  (size === "lg" && i === 0 ? " bg-[#f0f0f0]" : "")
                }
              >
                {r.kind === "layer" && (
                  <>
                    <Arrow s={s} dir={r.dir} />
                    <Check s={s} on={r.on} label={"Show " + r.name} />
                    <span className={"flex shrink-0 justify-center " + s.cell}>
                      <Icon n={r.icon} c={s.treeIcon} />
                    </span>
                    <span className={"grow " + s.layerGap + " " + r.look}>{r.name}</span>
                    <span className="mr-px h-4/5 w-[1%] min-w-[2px] bg-[#e2e2e2]" />
                  </>
                )}
                {r.kind === "rule" && (
                  <>
                    <Check s={s} on label={"Show class " + r.name} />
                    <span className={"flex shrink-0 justify-center " + s.cell}>
                      <span className={"border border-black/40 " + s.swatch + " " + r.color} />
                    </span>
                    <span className={s.gap}>{r.name}</span>
                  </>
                )}
                {r.kind === "value" && (
                  <>
                    <span className={s.cell} />
                    <span className={"flex shrink-0 justify-center " + s.cell}>
                      <span className={(size === "lg" ? "size-[18px] " : "size-[10px] ") + r.color} />
                    </span>
                    <span className={s.layerGap}>{r.name}</span>
                  </>
                )}
              </li>
            ))}
          </ul>
        </div>
        {size === "sm" && <VBar s={s} track="h-[38px] shrink-0 border-b border-[#b4b4b4]" thumb="grow-100" />}
      </div>
    </>
  );
}

/* ---------- maps ---------- */

const VALLEY =
  "M645 57L655 62 660 75 670 88 680 98 671 104 678 110 672 114 681 122 672 128 665 132 650 136 640 140 620 145 602 153 592 162 585 170 570 180 564 190 555 200 545 212 535 220 525 225 515 226 494 228 492 240 486 246 475 260 466 275 474 284 478 292 486 300 484 320 488 345 485 372 500 378 510 388 513 398 515 410 514 422 508 436 500 448 485 460 470 462 464 474 455 480 452 495 445 510 434 520 425 525 413 535 400 540 385 548 372 560 375 575 368 588 358 586 350 595 340 608 332 618 325 620 310 625 302 632 298 640 300 650 308 657 290 660 275 662 268 680 267 690 276 700 278 710 274 722 276 732 284 742 288 750 292 770 305 785 306 795 310 805 316 822 319 838 312 840 305 846 295 843 290 858 290 870 288 885 282 892 275 900 262 903 258 898 245 902 235 899 230 901 222 920 220 940 222 950 228 962 252 966 240 971 248 985 250 995 255 1000 268 1005 272 1020 270 1032 275 1050 286 1046 286 1056 290 1062 305 1060 307 1067 285 1064 268 1068 255 1070 252 1055 250 1045 238 1025 228 1018 230 998 220 990 218 978 200 965 192 950 190 940 189 925 184 903 190 885 191 872 195 866 200 872 212 870 225 862 232 850 228 838 232 824 240 815 239 800 236 790 233 760 228 745 225 735 210 718 195 708 175 700 166 694 158 697 150 685 140 665 135 648 120 635 110 622 100 615 97 608 108 600 118 594 145 592 165 600 180 607 195 620 205 632 218 642 228 625 236 610 240 600 260 592 280 575 290 570 300 560 315 548 320 530 328 515 335 500 348 485 365 465 372 445 378 435 385 425 400 412 410 412 420 405 440 403 455 392 453 382 447 375 450 360 446 350 444 335 440 322 438 305 432 298 428 285 426 265 428 240 440 215 448 208 460 195 465 175 470 162 478 150 490 132 510 125 530 117 545 118 555 130 575 135 592 125 602 115 602 95 598 78 620 72 638 68Z";

function Valley({ id }: { id: string }) {
  return (
    <g>
      <defs>
        <linearGradient id={id} gradientUnits="userSpaceOnUse" x1="0" y1="60" x2="0" y2="1070">
          <stop offset="0" stopColor="#fc9f84" />
          <stop offset=".06" stopColor="#fdb8a3" />
          <stop offset=".12" stopColor="#fdd8cb" />
          <stop offset=".22" stopColor="#fee6dd" />
          <stop offset=".38" stopColor="#fedbcf" />
          <stop offset=".54" stopColor="#fdc5b3" />
          <stop offset=".66" stopColor="#fcb9a5" />
          <stop offset=".76" stopColor="#fcb39d" />
          <stop offset=".83" stopColor="#fb8162" />
          <stop offset="1" stopColor="#fb9a80" />
        </linearGradient>
        <radialGradient id={id + "w"} gradientUnits="userSpaceOnUse" cx="120" cy="620" r="130">
          <stop offset="0" stopColor="#fb8b6d" />
          <stop offset=".6" stopColor="#fb9a80" stopOpacity=".7" />
          <stop offset="1" stopColor="#fcb9a5" stopOpacity="0" />
        </radialGradient>
        <radialGradient id={id + "e"} gradientUnits="userSpaceOnUse" cx="645" cy="100" r="75">
          <stop offset="0" stopColor="#fc9f84" />
          <stop offset=".5" stopColor="#fca68c" stopOpacity=".8" />
          <stop offset="1" stopColor="#fdb8a3" stopOpacity="0" />
        </radialGradient>
      </defs>
      <path d={VALLEY} fill={`url(#${id})`} />
      <path d={VALLEY} fill={`url(#${id}e)`} />
      <path d={VALLEY} fill={`url(#${id}w)`} stroke="#ec9f88" strokeWidth="1.500" strokeDasharray="3 3" />
      <path d="M103 588l12 5M118 591l20 3" stroke="#8a1414" strokeWidth="3" />
      <path d="M180 650l8 1M154 673l8 10M164 686l6 4M492 155v9" stroke="#fff" strokeWidth="5" />
    </g>
  );
}

/* ---------- application windows ---------- */

function MainWindow() {
  const s = SIZES.lg;
  return (
    <section className="absolute top-0 left-0 flex h-[972px] w-[1244px] flex-col border border-[#8c8c94] bg-[#f0f0f0]">
      <TitleBar s={s} />
      <MenuBar s={s} active="_Raster" />
      <Toolbars size="lg" />
      <div className="flex min-h-0 grow pt-px">
        <SideBar s={s} />
        <div className={"flex shrink-0 flex-col " + s.dock}>
          <Browser s={s} />
          <Layers size="lg" />
        </div>
        <div className="relative grow overflow-hidden border-t border-l border-[#a8a8a8] bg-white">
          <div className="absolute top-[90px] left-[44px] bg-[#dfdfdf]">
            <svg viewBox="77 39 607 1074" className="block h-[574px] w-[324px]" aria-label="Selected extent">
              <g opacity=".4">
                <Valley id="lakeA" />
              </g>
            </svg>
          </div>
          <svg viewBox="1035 490 285 280" preserveAspectRatio="none" className="absolute top-[304px] left-[368px] h-[127px] w-[95px]" aria-label="Eastern lake">
            <g stroke="#ec9f88" strokeWidth="1.500" strokeDasharray="4 3">
              <path d="M1040 600L1046 590 1056 586 1070 596 1072 602 1062 612 1048 608Z" fill="#fcc3b2" />
              <path
                d="M1078 620L1100 622 1118 618 1116 608 1102 600 1104 590 1122 584 1134 570 1126 548 1130 536 1150 528 1166 530 1168 544 1158 556 1154 576 1136 590 1138 610 1144 625 1146 645 1136 660 1136 684 1148 698 1168 718 1184 714 1210 692 1238 668 1244 650 1262 635 1298 637 1300 652 1310 680 1322 690 1322 710 1300 696 1282 688 1264 680 1242 688 1220 710 1196 732 1170 744 1150 762 1138 752 1140 736 1120 712 1112 690 1116 664 1124 650 1118 628 1090 630 1080 626Z"
                fill="#fdd0c2"
              />
              <path d="M1264 630L1268 590 1280 570 1282 545 1262 530 1260 518 1270 506 1290 508 1300 500 1322 498 1322 560 1312 610 1298 632Z" fill="#feeae3" />
            </g>
            <path d="M1264 628l34 2v7l-36-2z" fill="#c8181c" />
          </svg>
        </div>
      </div>
      <footer className={"flex shrink-0 items-center text-[#111] " + s.status + " " + s.labelText}>
        <label className="flex h-[25px] w-[241px] items-center gap-[8px] rounded-[3px] border border-[#b4b4b4] bg-white px-[8px]">
          <Icon n="search" c="size-[13px] shrink-0" />
          <input placeholder="Type to locate (Ctrl+K)" className="w-full text-[14px] placeholder:text-[#8c8c8c]" />
        </label>
        <label htmlFor="coord" className="ml-[48px] flex w-[60px] justify-center overflow-hidden">Coordinate</label>
        <input id="coord" defaultValue="512889,5121744" className="ml-[2px] h-[25px] w-[114px] rounded-[3px] border border-[#b4b4b4] bg-white px-[6px]" />
        <Icon n="bug" c="ml-[5px] size-[20px]" />
        <label htmlFor="scale" className="ml-[14px] flex w-[28px] justify-end overflow-hidden">Scale</label>
        <span className="relative ml-[3px] flex items-center">
          <select id="scale" className="h-[25px] w-[92px] appearance-none rounded-[3px] border border-[#b4b4b4] bg-white px-[3px]">
            <option>1:459304</option>
          </select>
          <Icon n="down" c="pointer-events-none absolute right-2 size-[9px]" />
        </span>
      </footer>
    </section>
  );
}

function ResultWindow() {
  const s = SIZES.sm;
  const field = "h-[14px] rounded-[1px] border border-[#b4b4b4] bg-white";
  return (
    <section className="absolute top-[753px] left-[622px] flex h-[545px] w-[749px] flex-col border border-[#909090] bg-[#f0f0f0]">
      <TitleBar s={s} />
      <MenuBar s={s} />
      <Toolbars size="sm" />
      <div className="flex min-h-0 grow">
        <SideBar s={s} />
        <div className={"flex shrink-0 flex-col " + s.dock}>
          <Browser s={s} />
          <Layers size="sm" />
        </div>
        <div className="relative grow overflow-hidden border-t border-l border-[#c0c0c0] bg-white">
          <svg viewBox="90 50 600 1030" className="absolute top-[48px] left-[137px] h-[343px] w-[200px]" aria-label="Clipped raster">
            <Valley id="lakeB" />
          </svg>
        </div>
      </div>
      <footer className={"flex shrink-0 items-center whitespace-nowrap text-[#111] " + s.status + " " + s.labelText}>
        <label className="flex h-[14px] w-[135px] shrink-0 items-center gap-[4px] rounded-[2px] border border-[#b4b4b4] bg-white px-[4px]">
          <Icon n="search" c="size-[7px] shrink-0" />
          <input placeholder="Type to locate (Ctrl+K)" className="w-full text-[8px] placeholder:text-[#8c8c8c]" />
        </label>
        <label htmlFor="coord2" className="ml-[66px] w-[40px] shrink-0">Coordinate</label>
        <input id="coord2" defaultValue="456821,5114278" className={"w-[64px] shrink-0 pl-px " + field} />
        <Icon n="bug" c="ml-[2px] size-[12px] shrink-0" />
        <label htmlFor="scale2" className="ml-[8px] w-[21px] shrink-0">Scale</label>
        <span className="relative flex shrink-0 items-center">
          <select id="scale2" className={"w-[54px] appearance-none px-[2px] " + field}>
            <option>1:413473</option>
          </select>
          <Icon n="down" c="pointer-events-none absolute right-[6px] size-[5px]" />
        </span>
        <Icon n="lock" c="ml-[7px] size-[11px] shrink-0" />
        <label htmlFor="mag" className="ml-[3px] w-[35px] shrink-0">Magnifier</label>
        <span className={"flex w-[52px] shrink-0 " + field}>
          <input id="mag" defaultValue="100%" className="w-full min-w-0 px-[2px]" />
          <Steps s={s} />
        </span>
        <label htmlFor="rot" className="ml-[5px] w-[34px] shrink-0">Rotation</label>
        <span className={"flex w-[51px] shrink-0 " + field}>
          <input id="rot" defaultValue="0,0 °" className="w-full min-w-0 px-[2px]" />
          <Steps s={s} />
        </span>
        <label className="ml-[2px] flex shrink-0 items-center gap-[2px]">
          <Check s={s} on label="Render" />
          Render
        </label>
        <button className="ml-[11px] flex shrink-0 items-center gap-[3px]">
          <Icon n="crs" c="size-[11px]" />
          EPSG:32632
        </button>
        <button aria-label="Messages" className="ml-[12px] shrink-0">
          <Icon n="msg" c="size-[12px]" />
        </button>
      </footer>
    </section>
  );
}

/* ---------- menus ---------- */

function RasterMenu() {
  const items = [
    ["Raster Calculator...", "rcalc", ""],
    ["Align Rasters...", "", ""],
    ["Analisi", "", ">"],
    ["Proiezioni", "", ">"],
    ["Miscellanea", "", ">"],
    ["Estrazione", "", ">"],
    ["Conversione", "", ">"],
  ];
  return (
    <ul className="absolute top-[65px] left-[411px] w-[247px] border border-[#8f8f8f] bg-white text-[15px] text-[#111] shadow-[2px_3px_3px_rgba(0,0,0,0.4)]">
      {items.map(([t, icon, sub]) => (
        <li key={t}>
          <button
            className={
              "flex h-[29px] w-full items-center pr-[5px] text-left " +
              (t === "Estrazione" ? "border border-[#3a9bea] bg-[#0078d7] text-white" : "")
            }
          >
            <span className={t === "Estrazione" ? "w-[32px]" : "w-[33px] pl-[6px]"}>{icon && <Icon n={icon} c="size-[21px]" />}</span>
            <span className="grow">{t}</span>
            {sub && <Icon n={t === "Estrazione" ? "rightlight" : "right"} c="size-[10px]" />}
          </button>
        </li>
      ))}
    </ul>
  );
}

function ClipMenu() {
  const items = [
    ["Clip Raster by Extent...", "clip"],
    ["Clip Raster by Mask Layer...", "clip"],
    ["Contour...", "contour"],
  ];
  return (
    <ul className="absolute top-[209px] left-[658px] w-[305px] border border-[#8f8f8f] bg-white text-[15px] text-[#111] shadow-[2px_3px_3px_rgba(0,0,0,0.4)]">
      {items.map(([t, icon], i) => (
        <li key={t}>
          <button
            className={
              "flex h-[29px] w-full items-center gap-[6px] pl-[5px] text-left whitespace-nowrap " +
              (i === 0 ? "bg-[#0078d7] text-white outline-1 -outline-offset-1 outline-[#3a9bea]" : "")
            }
          >
            <span className={i === 0 ? "bg-[#a8cdf0]" : ""}>
              <Icon n={icon} c="size-[21px]" />
            </span>
            {t}
          </button>
        </li>
      ))}
    </ul>
  );
}

/* ---------- dialog ---------- */

const dots = "h-[36px] w-[41px] shrink-0 rounded-[4px] border-2 border-[#b4b4b4] bg-linear-to-b from-white to-[#f0f0f0] text-[19px] leading-none font-bold text-[#333]";
const textBox = "block h-[37px] rounded-[4px] border-2 border-[#b4b4b4] bg-white";
const push = "h-[39px] w-[124px] rounded-[4px] border-2 border-[#b4b4b4] bg-linear-to-b from-white to-[#f0f0f0]";

function Dialog() {
  return (
    <section className="absolute top-[244px] left-[839px] flex h-[785px] w-[959px] flex-col border-2 border-[#777] bg-[#f0f0f0] text-[19px] text-[#111]">
      <header className="flex h-[57px] shrink-0 items-center bg-white pr-[23px] pl-[13px]">
        <Icon n="logo" c="size-[31px]" />
        <h2 className="grow pl-[8px] text-[22px]">Clip Raster by Extent</h2>
        <button aria-label="Close dialog">
          <Icon n="x" c="size-[20px]" />
        </button>
      </header>
      <div className="mt-[21px] flex shrink-0 items-end pl-[20px]" role="tablist">
        <button role="tab" aria-selected="true" className="relative z-10 -mb-[2px] h-[48px] w-[152px] rounded-t-[4px] border-2 border-b-0 border-[#b4b4b4] bg-[#fcfcfc] pt-[2px]">
          Parameters
        </button>
        <button role="tab" aria-selected="false" className="-ml-[2px] h-[43px] w-[79px] rounded-t-[4px] border-2 border-b-0 border-[#c0c0c0] bg-[#e9e9e9] pt-[2px]">
          Log
        </button>
      </div>
      <div className="mr-[20px] ml-[20px] flex h-[500px] shrink-0 border-2 border-[#b4b4b4]">
        <div className="min-w-0 grow overflow-hidden pt-[7px] pr-[8px] pl-[6px]">
          <label htmlFor="layer" className="flex h-[28px] items-center pl-[2px]">Input layer</label>
          <div className="mt-px flex h-[48px] items-start gap-[6px] pt-[8px]">
            <span className="relative -mr-px -ml-[2px] flex h-[44px] grow items-center border-3 border-[#f00]">
              <Icon n="ras" c="pointer-events-none absolute left-[11px] size-[30px]" />
              <select id="layer" className="size-full appearance-none rounded-[3px] border border-[#b4b4b4] bg-linear-to-b from-white to-[#ececec] pl-[44px]">
                <option>Temperature_distribution [EPSG:32632]</option>
              </select>
              <Icon n="down" c="pointer-events-none absolute right-[18px] size-[16px]" />
            </span>
            <button className={dots}>...</button>
          </div>
          <label htmlFor="extent" className="mt-[13px] flex h-[28px] items-center pl-[2px]">Clipping extent (xmin, xmax, ymin, ymax)</label>
          <div className="mt-[9px] flex items-start gap-[10px]">
            <input
              id="extent"
              defaultValue="455731.0086,488997.9658,5061705.0065,5121828.6767 [EPSG:32632]"
              className={"min-w-0 grow px-[3px] text-[16px] " + textBox}
            />
            <button className={dots}>...</button>
          </div>
          <label htmlFor="nodata" className="mt-[11px] flex h-[28px] items-center pl-[2px]">
            Assign a specified nodata value to output bands [optional]
          </label>
          <input id="nodata" placeholder="Not set" className={"mt-[9px] w-full px-[7px] placeholder:text-[#8c8c8c] " + textBox} />
          <button className="mt-[12px] flex h-[28px] items-center gap-[13px] pl-[5px] text-[21px] font-bold">
            <Icon n="right" c="size-[18px]" />
            Advanced parameters
          </button>
          <label htmlFor="clipped" className="mt-[17px] flex h-[28px] items-center pl-[2px]">Clipped (extent)</label>
          <div className="mt-[8px] flex items-start gap-[10px]">
            <input id="clipped" placeholder="[Save to temporary file]" className={"min-w-0 grow px-[4px] placeholder:text-[#8c8c8c] " + textBox} />
            <button className={dots}>...</button>
          </div>
          <output className="mt-[90px] block h-[50px] w-full border-2 border-[#b4b4b4] bg-white pt-[5px] pr-[79px] text-right text-[19px]">
            46086421,489015.16280875586
          </output>
        </div>
        <div className="flex w-[27px] shrink-0 flex-col border-l-2 border-[#c4c4c4] bg-[#e6e6e6]">
          <button aria-label="Scroll up" className="flex h-[27px] items-center justify-center border-b-2 border-[#c4c4c4] bg-[#fafafa]">
            <Icon n="up" c="size-[15px]" />
          </button>
          <span className="h-[357px] border-b-2 border-[#c4c4c4] bg-linear-to-r from-white to-[#f4f4f4]" />
          <span className="grow" />
          <button aria-label="Scroll down" className="flex h-[28px] items-center justify-center border-t-2 border-[#c4c4c4] bg-[#fafafa]">
            <Icon n="down" c="size-[15px]" />
          </button>
        </div>
      </div>
      <div className="mt-[49px] mr-[21px] ml-[20px] flex gap-[12px]">
        <progress value={0} max={100} aria-label="Progress" className="h-[38px] min-w-0 grow appearance-none rounded-[3px] border-2 border-[#b4b4b4] bg-white [&::-webkit-progress-bar]:bg-white" />
        <button disabled className={"pt-[2px] text-[#8c8c8c] " + push}>Cancel</button>
      </div>
      <div className="mt-[11px] mr-[21px] flex justify-end gap-[12px]">
        <button className={"pt-[2px] border-[#7cc0f4]! to-[#e4e9f0]! " + push}>Run</button>
        <button className={"pt-[2px] " + push}>Close</button>
        <button className={"pt-[2px] " + push}>Help</button>
      </div>
    </section>
  );
}

/* ---------- callouts ---------- */

const Badge = ({ n, at }: { n: string; at: string }) => (
  <span className={"absolute flex size-[49px] items-center justify-center rounded-full bg-[#f00] font-[Lato,sans-serif] text-[39px] leading-none text-white " + at}>
    {n}
  </span>
);

function ExtentMenu() {
  return (
    <ul className="absolute top-[542px] left-[1617px] w-[296px] border-2 border-[#b0b0b0] bg-white text-[19px] text-[#111]">
      <li>
        <button className="flex h-[39px] w-full items-center justify-between pr-[3px] pl-[41px]">
          Calculate from Layer
          <Icon n="right" c="size-[13px]" />
        </button>
      </li>
      <li>
        <button className="flex h-[34px] w-full items-center pl-[41px]">Use Map Canvas Extent</button>
      </li>
      <li className="-mx-[2px] -mb-[2px]">
        <button className="flex h-[41px] w-full items-center border-3 border-[#f00] pl-[40px]">Draw on Canvas</button>
      </li>
    </ul>
  );
}

export default function App() {
  return (
    <main className={"relative h-screen min-h-[1298px] w-full overflow-hidden bg-white leading-tight " + UI}>
      <MainWindow />
      <RasterMenu />
      <ClipMenu />
      <Dialog />
      <span className="absolute top-[502px] left-[1698px] h-[42px] w-[47px] border-3 border-[#f00]" />
      <svg viewBox="0 0 860 40" className="absolute top-[609px] left-[744px] h-[40px] w-[860px]" aria-hidden="true">
        <path d="M0 20L20 0v10h840v20H20v10z" fill="#f00" />
      </svg>
      <ExtentMenu />
      <Badge n="1" at="top-[419px] left-[1569px]" />
      <Badge n="2" at="top-[495px] left-[1734px]" />
      <Badge n="3" at="top-[599px] left-[1583px]" />
      <Badge n="4" at="top-[666px] left-[703px]" />
      <ResultWindow />
      <svg viewBox="0 0 64 88" className="absolute top-[721px] left-[1190px] h-[88px] w-[64px]" aria-hidden="true">
        <path d="M16.500 1h30v55.500H62L31.500 86 2 56.500h14.500z" fill="#ff3300" stroke="#f00" strokeWidth="1.500" />
      </svg>
    </main>
  );
}
